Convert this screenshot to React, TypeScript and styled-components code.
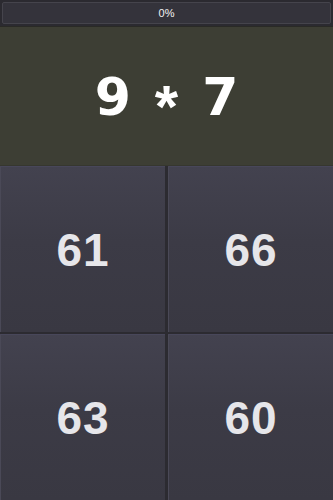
import React from 'react';
import styled, { createGlobalStyle } from 'styled-components';

const Global = createGlobalStyle`
    html, body {
        margin: 0;
        padding: 0;
        background: #2e2d33;
        font-family: "Liberation Sans", Arial, sans-serif;
    }
`

const Screen = styled.div`
    width: 333px;
    height: 500px;
    display: flex;
    flex-direction: column;
    background: #2e2d33;
    overflow: hidden;
`

const ProgressBar = styled.div`
    height: 27px;
    box-sizing: border-box;
    padding: 2px;
    background: #2b2a30;
    border-bottom: 1px solid #2a2a26;
`

const ProgressTrack = styled.div`
    height: 100%;
    box-sizing: border-box;
    border: 1px solid #45444c;
    border-radius: 2px;
    background: #34333b;
    display: flex;
    align-items: center;
    justify-content: center;
    color: #f2f2f2;
    font-size: 11px;
`

const Question = styled.div`
    height: 139px;
    background: #3d3e34;
    border-bottom: 1px solid #36372f;
    display: flex;
    align-items: center;
    justify-content: center;
    gap: 24px;
    color: #ffffff;
    font-family: "DejaVu Sans", sans-serif;
    font-size: 52px;
    font-weight: bold;
    padding-top: 2px;
    box-sizing: border-box;
`

const Operator = styled.span`
    display: inline-block;
    font-family: "Liberation Sans", Arial, sans-serif;
    font-size: 60px;
    transform: translateY(9px);
`

const Answers = styled.div`
    flex: 1;
    display: grid;
    grid-template-columns: 1fr 1fr;
    grid-template-rows: 1fr 1fr;
    gap: 2px 3px;
    background: #2c2b31;
`

const AnswerButton = styled.button`
    border: none;
    border-left: 1px solid #4a4957;
    border-top: 1px solid #48475a;
    margin: 0;
    padding: 0;
    background: linear-gradient(180deg, #43424f 0%, #3c3b46 45%, #393842 100%);
    color: #e6e6ea;
    font-family: "Liberation Sans", Arial, sans-serif;
    font-size: 46px;
    font-weight: bold;
    letter-spacing: 1px;
    display: flex;
    align-items: center;
    justify-content: center;
    cursor: pointer;
`

const answers = [61, 66, 63, 60];

const App: React.FC = () => {
    return (
        <>
        <Global />
        <Screen>
            <ProgressBar>
                <ProgressTrack>0%</ProgressTrack>
            </ProgressBar>
            <Question>
                <span>9</span>
                <Operator>*</Operator>
                <span>7</span>
            </Question>
            <Answers>
                {answers.map(a => (
                    <AnswerButton key={a}>{a}</AnswerButton>
                ))}
            </Answers>
        </Screen>
        </>
    );
}

export default App;
